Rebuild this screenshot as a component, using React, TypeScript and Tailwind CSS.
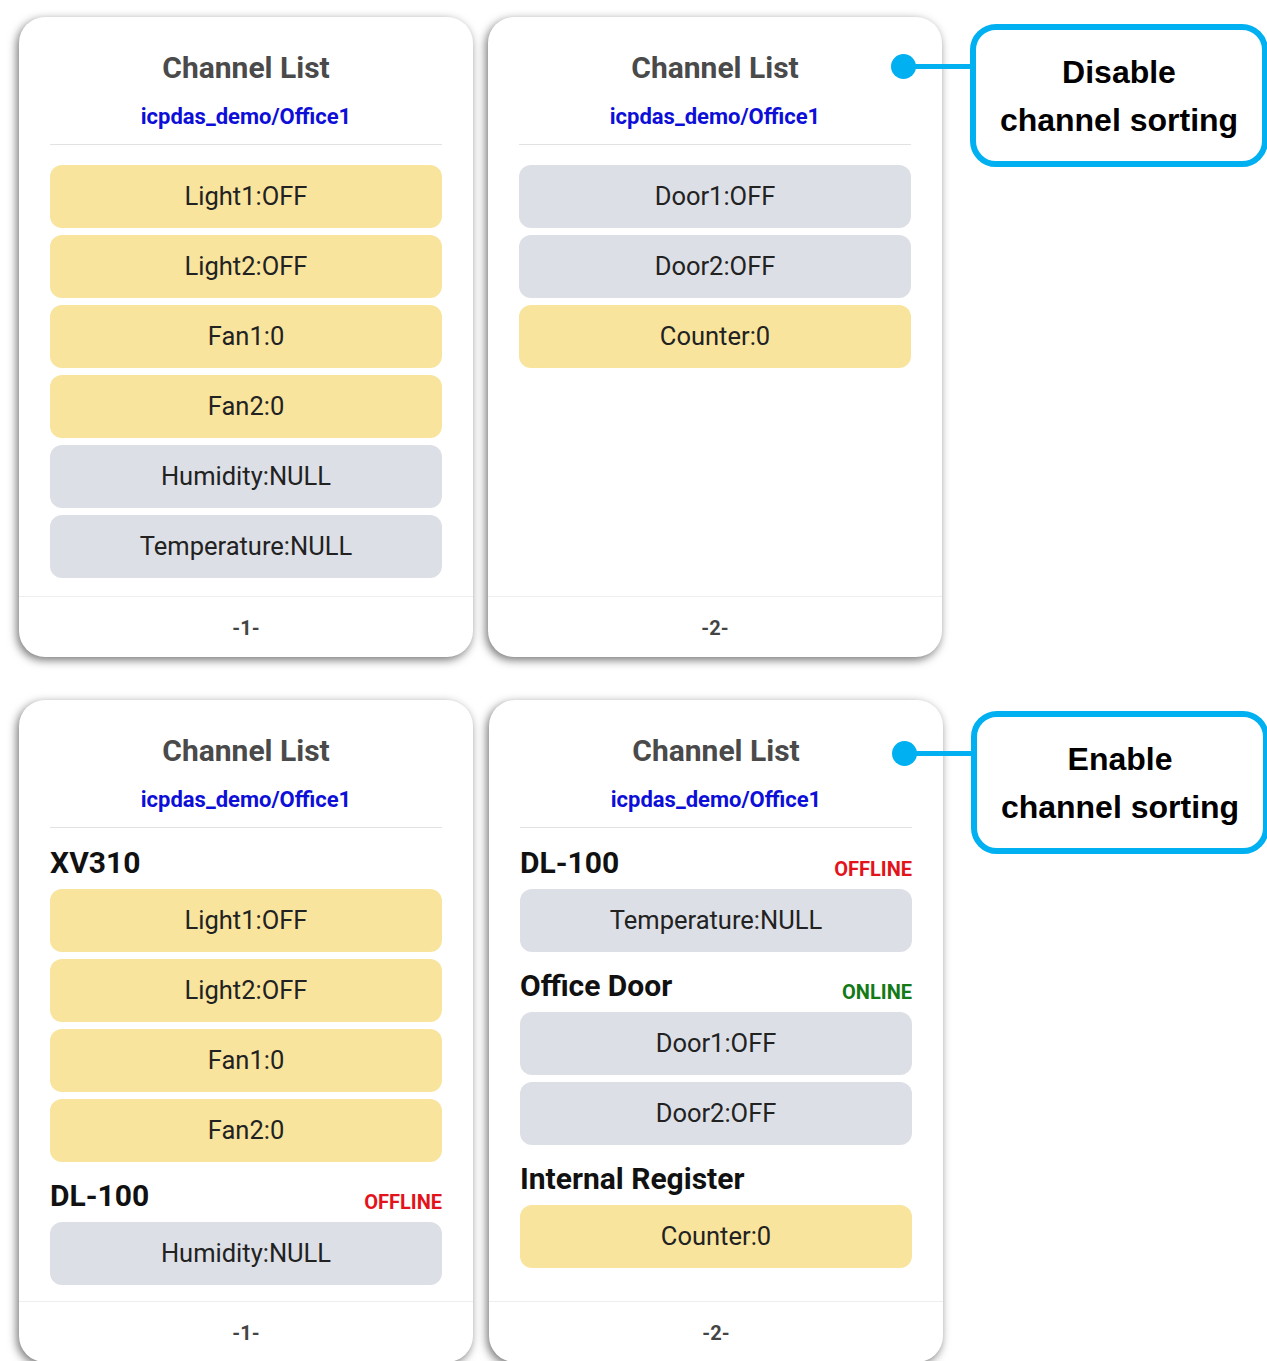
import React from "react";

/* ─── Types ───────────────────────────────────────────────────────────────── */
type Tone = "yellow" | "gray";

interface Channel {
  label: string;
  tone: Tone;
}

interface Group {
  name: string;
  status?: "OFFLINE" | "ONLINE";
  channels: Channel[];
}

/* ─── Static data ─────────────────────────────────────────────────────────── */
const FLAT_1: Channel[] = [
  { label: "Light1:OFF", tone: "yellow" },
  { label: "Light2:OFF", tone: "yellow" },
  { label: "Fan1:0", tone: "yellow" },
  { label: "Fan2:0", tone: "yellow" },
  { label: "Humidity:NULL", tone: "gray" },
  { label: "Temperature:NULL", tone: "gray" },
];

const FLAT_2: Channel[] = [
  { label: "Door1:OFF", tone: "gray" },
  { label: "Door2:OFF", tone: "gray" },
  { label: "Counter:0", tone: "yellow" },
];

const GROUPS_1: Group[] = [
  {
    name: "XV310",
    channels: [
      { label: "Light1:OFF", tone: "yellow" },
      { label: "Light2:OFF", tone: "yellow" },
      { label: "Fan1:0", tone: "yellow" },
      { label: "Fan2:0", tone: "yellow" },
    ],
  },
  { name: "DL-100", status: "OFFLINE", channels: [{ label: "Humidity:NULL", tone: "gray" }] },
];

const GROUPS_2: Group[] = [
  { name: "DL-100", status: "OFFLINE", channels: [{ label: "Temperature:NULL", tone: "gray" }] },
  {
    name: "Office Door",
    status: "ONLINE",
    channels: [
      { label: "Door1:OFF", tone: "gray" },
      { label: "Door2:OFF", tone: "gray" },
    ],
  },
  { name: "Internal Register", channels: [{ label: "Counter:0", tone: "yellow" }] },
];

/* ─── Pieces ──────────────────────────────────────────────────────────────── */
function ChannelButton({ ch }: { ch: Channel }) {
  return (
    <div
      className={
        "h-[63px] rounded-[12px] flex items-center justify-center text-[25.5px] text-[#222222] " +
        (ch.tone === "yellow" ? "bg-[#f8e49d]" : "bg-[#dcdfe5]")
      }
    >
      {ch.label}
    </div>
  );
}

function GroupBlock({ group, first }: { group: Group; first: boolean }) {
  return (
    <div className={first ? "mt-[17px]" : "mt-[16px]"}>
      <div className="h-[36px] flex items-end justify-between mb-[8px]">
        <span className="text-[30px] leading-[36px] font-bold text-[#111111]">{group.name}</span>
        {group.status && (
          <span
            className={
              "text-[20px] leading-[24px] font-bold " +
              (group.status === "OFFLINE" ? "text-[#e3131b]" : "text-[#137a17]")
            }
          >
            {group.status}
          </span>
        )}
      </div>
      <div className="flex flex-col gap-[7px]">
        {group.channels.map((ch) => (
          <ChannelButton key={ch.label} ch={ch} />
        ))}
      </div>
    </div>
  );
}

function Card({ page, tall, children }: { page: number; tall?: boolean; children: React.ReactNode }) {
  return (
    <div
      className={
        "w-[454px] shrink-0 bg-white rounded-[26px] flex flex-col shadow-[-2px_3px_10px_rgba(0,0,0,0.55)] " +
        (tall ? "h-[662px]" : "h-[640px]")
      }
    >
      <div className="px-[31px] pt-[33px]">
        <h2 className="text-center text-[30px] leading-[36px] font-bold text-[#4a4a4a]">Channel List</h2>
        <p className="mt-[18px] text-center text-[22px] leading-[26px] font-bold text-[#0d0fd8]">
          icpdas_demo/Office1
        </p>
        <div className="mt-[14px] h-px bg-[#e2e2e2]" />
      </div>
      <div className="flex-1 px-[31px]">{children}</div>
      <div className="h-[61px] border-t border-[#eeeeee] flex items-center justify-center pt-px text-[20px] font-bold text-[#444444]">
        -{page}-
      </div>
    </div>
  );
}

function Callout({ lines, top }: { lines: string[]; top: string }) {
  return (
    <div className={"relative ml-[13px] " + top}>
      {/* connector */}
      <div className="absolute left-[-67px] top-[40px] w-[67px] h-[5px] bg-[#00b0f0]" />
      <div className="absolute left-[-79px] top-[30px] w-[25px] h-[25px] rounded-full bg-[#00b0f0]" />
      <div className="w-[298px] h-[143px] rounded-[26px] border-[6px] border-[#00b0f0] bg-white flex flex-col items-center justify-center font-['Liberation_Sans',Arial,sans-serif] text-[32px] leading-[48px] font-bold text-black">
        {lines.map((l) => (
          <span key={l}>{l}</span>
        ))}
      </div>
    </div>
  );
}

/* ─── App ─────────────────────────────────────────────────────────────────── */
export default function App() {
  return (
    <div className="w-[1267px] h-[1361px] overflow-hidden bg-white pl-[19px] pt-[17px] font-['Roboto',sans-serif]">
      <div className="flex flex-col gap-[43px]">
        {/* ── Sorting disabled ── */}
        <div className="flex items-start gap-[15px]">
          <Card page={1}>
            <div className="mt-[20px] flex flex-col gap-[7px]">
              {FLAT_1.map((ch) => (
                <ChannelButton key={ch.label} ch={ch} />
              ))}
            </div>
          </Card>
          <Card page={2}>
            <div className="mt-[20px] flex flex-col gap-[7px]">
              {FLAT_2.map((ch) => (
                <ChannelButton key={ch.label} ch={ch} />
              ))}
            </div>
          </Card>
          <Callout lines={["Disable", "channel sorting"]} top="mt-[7px]" />
        </div>

        {/* ── Sorting enabled ── */}
        <div className="flex items-start gap-[15px]">
          <Card page={1} tall>
            {GROUPS_1.map((g, i) => (
              <GroupBlock key={g.name} group={g} first={i === 0} />
            ))}
          </Card>
          <div className="pl-px">
            <Card page={2} tall>
              {GROUPS_2.map((g, i) => (
                <GroupBlock key={g.name} group={g} first={i === 0} />
              ))}
            </Card>
          </div>
          <Callout lines={["Enable", "channel sorting"]} top="mt-[11px]" />
        </div>
      </div>
    </div>
  );
}
